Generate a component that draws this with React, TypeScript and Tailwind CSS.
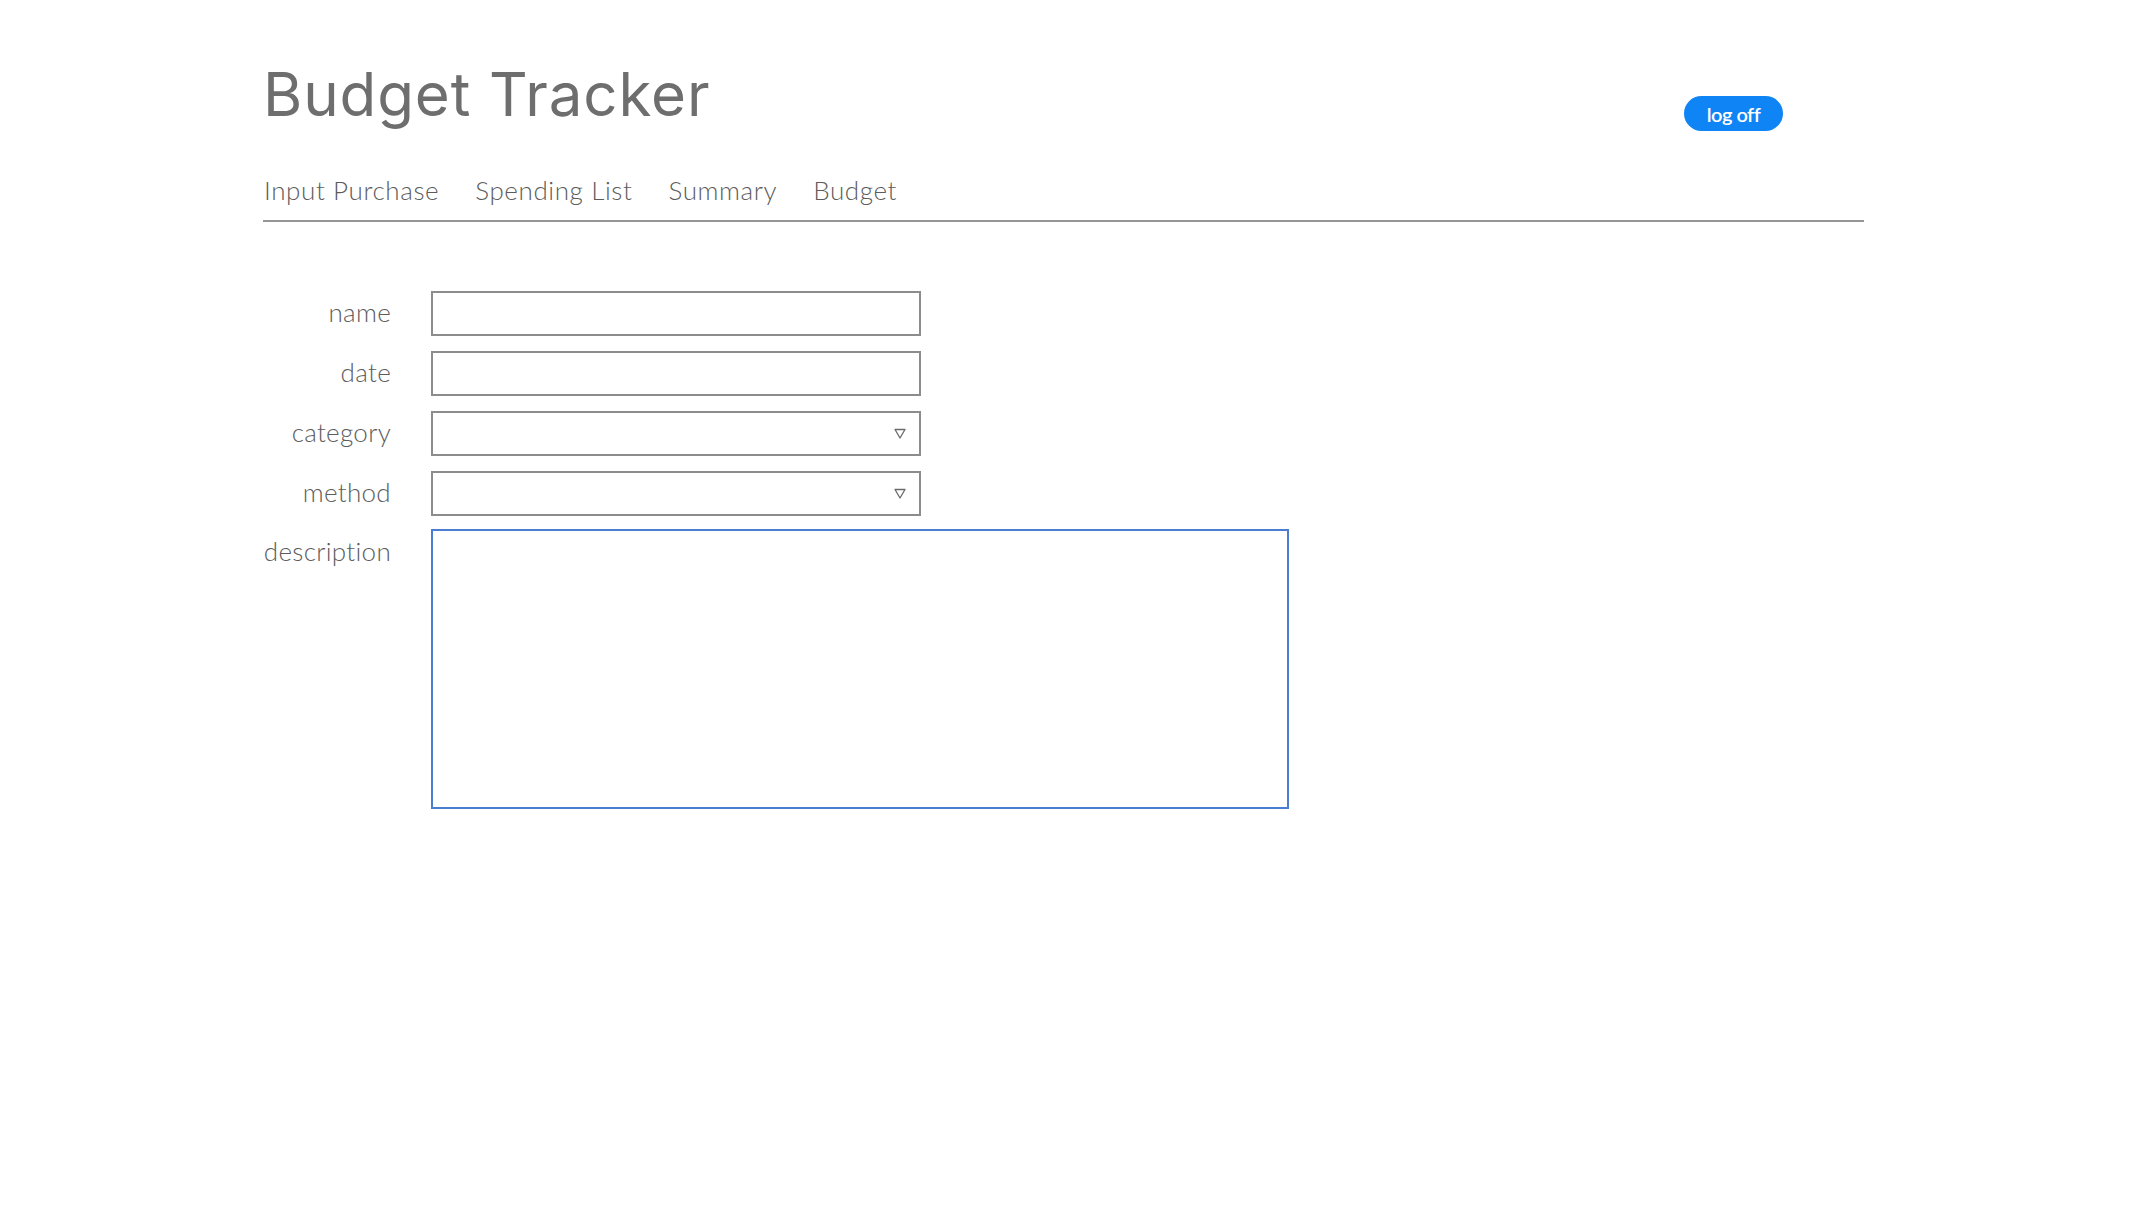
import { useState } from 'react';

const tabs = ['Input Purchase', 'Spending List', 'Summary', 'Budget'];

function DownTriangle() {
  return (
    <svg width="12" height="11" viewBox="0 0 12 11" fill="none" aria-hidden="true">
      <path d="M1 1.5h10L6 10z" stroke="#6b6b6b" strokeWidth="1.3" strokeLinejoin="round" />
    </svg>
  );
}

function Label({ children, top }: { children: string; top?: boolean }) {
  return (
    <label
      className={
        top
          ? 'pt-[5px] text-right text-[26px] leading-[31px] font-light tracking-[0.3px] text-[#5c5c5c]'
          : 'flex h-[45px] items-center justify-end pb-[3px] text-[26px] font-light tracking-[0.3px] text-[#5c5c5c]'
      }
    >
      {children}
    </label>
  );
}

export default function App() {
  const [active] = useState('Input Purchase');

  return (
    <div className="min-h-screen bg-white font-['Lato','Liberation_Sans',sans-serif]">
      <div className="ml-[263px] w-[1601px] pt-[64px]">
        <header className="flex items-start justify-between">
          <h1 className="font-['Inter','Lato',sans-serif] text-[60px] leading-none font-normal tracking-[0.9px] text-[#6e6e6e]">
            Budget Tracker
          </h1>
          <button
            type="button"
            className="mt-[32px] mr-[81px] flex h-[35px] w-[99px] items-center justify-center rounded-full bg-[#0f84f4] text-[20px] font-semibold tracking-[-0.5px] text-white"
          >
            log off
          </button>
        </header>

        <nav className="mt-[40px] flex gap-[36px] border-b-2 border-[#959595] pb-[10px] pl-[1px]">
          {tabs.map((tab) => (
            <a
              key={tab}
              href="#"
              className={
                'text-[26px] font-light tracking-[0.6px] text-[#5c5c5c] ' + (tab === active ? '' : '')
              }
            >
              {tab}
            </a>
          ))}
        </nav>

        <form className="mt-[69px] grid grid-cols-[128px_auto] gap-x-[40px] gap-y-[15px]">
          <Label>name</Label>
          <input className="h-[45px] w-[490px] border-2 border-[#8c8c8c] px-2 outline-none" />

          <Label>date</Label>
          <input className="h-[45px] w-[490px] border-2 border-[#8c8c8c] px-2 outline-none" />

          <Label>category</Label>
          <div className="flex h-[45px] w-[490px] items-center justify-end border-2 border-[#8c8c8c] pr-[13px]">
            <DownTriangle />
          </div>

          <Label>method</Label>
          <div className="flex h-[45px] w-[490px] items-center justify-end border-2 border-[#8c8c8c] pr-[13px]">
            <DownTriangle />
          </div>

          <Label top>description</Label>
          <textarea className="-mt-[2px] h-[280px] w-[858px] resize-none border-2 border-[#4a7ed3] outline-none" />
        </form>
      </div>
    </div>
  );
}
